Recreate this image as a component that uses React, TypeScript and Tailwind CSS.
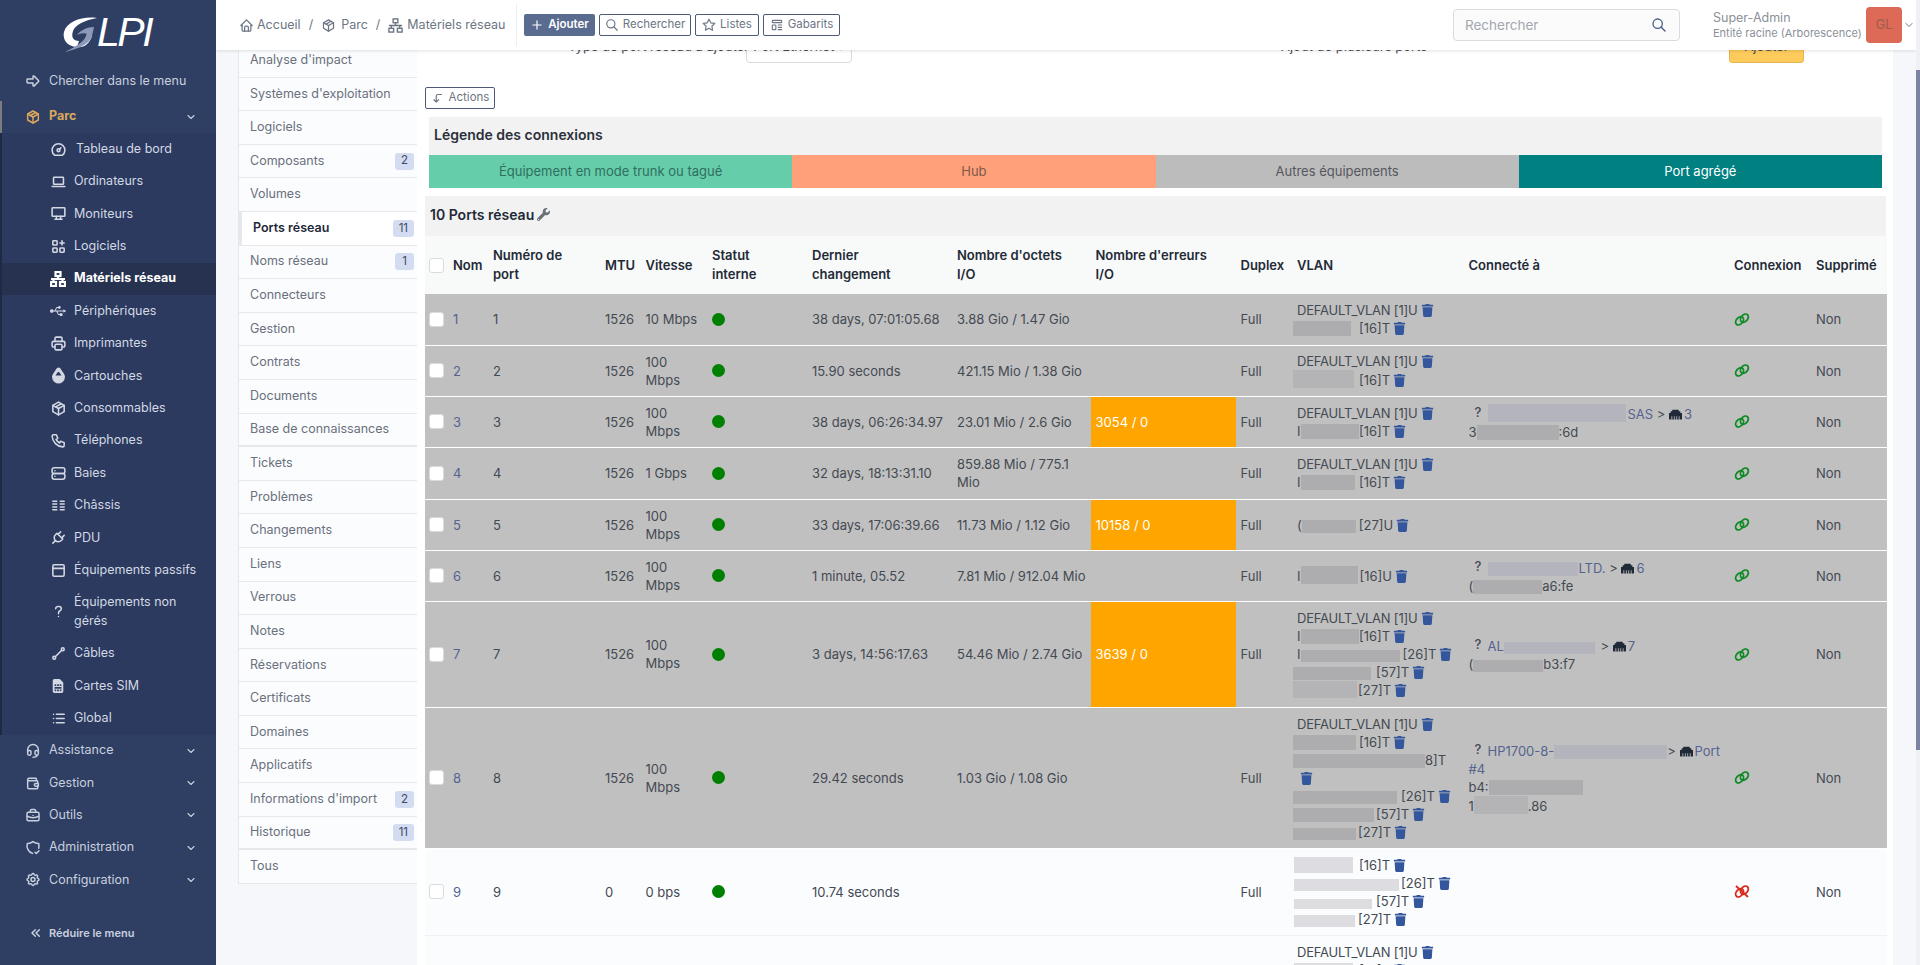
import type { ReactNode } from 'react'
import { FaEthernet, FaSimCard, FaTrash, FaUsb, FaWrench } from 'react-icons/fa'
import {
  TbApps,
  TbArrowBigRight,
  TbBriefcase,
  TbChevronDown,
  TbChevronsLeft,
  TbColumns,
  TbCornerLeftDown,
  TbDashboard,
  TbDeviceDesktop,
  TbDeviceLaptop,
  TbDropletHalf2Filled,
  TbHeadset,
  TbHome,
  TbLayoutNavbar,
  TbLine,
  TbList,
  TbPackage,
  TbPhone,
  TbPlug,
  TbPlus,
  TbPrinter,
  TbQuestionMark,
  TbSearch,
  TbServer,
  TbSettings,
  TbShieldCheck,
  TbStar,
  TbTemplate,
  TbWallet,
} from 'react-icons/tb'

// Three boxes wired together, the network equipment icon of the menu.
function NetIcon({ size }: { size: number }) {
  return (
    <svg viewBox="0 0 16 16" width={size} height={size} fill="none" stroke="currentColor" strokeWidth="1.5">
      <rect x="5.5" y="1" width="5" height="4" />
      <rect x="1" y="11" width="5" height="4" />
      <rect x="10" y="11" width="5" height="4" />
      <path d="M8 5v3M1 8h14M3.5 8v3M12.5 8v3" />
    </svg>
  )
}

function LinkIcon({ off }: { off?: boolean }) {
  return (
    <svg
      viewBox="0 0 16 13"
      width="16"
      height="13"
      fill="none"
      stroke="currentColor"
      strokeWidth="1.8"
      className={off ? 'text-[#d92b1c]' : 'text-[#0f8a25]'}
    >
      <ellipse cx="5.6" cy="7.8" rx="4.6" ry="3.3" transform="rotate(-48 5.6 7.8)" />
      <ellipse cx="10.4" cy="5.2" rx="4.6" ry="3.3" transform="rotate(-48 10.4 5.2)" />
      {off && <path d="M2 1l12 11" />}
    </svg>
  )
}

const subMenu = [
  { label: 'Tableau de bord', icon: <TbDashboard size={17} /> },
  { label: 'Ordinateurs', icon: <TbDeviceLaptop size={17} /> },
  { label: 'Moniteurs', icon: <TbDeviceDesktop size={17} /> },
  { label: 'Logiciels', icon: <TbApps size={17} /> },
  { label: 'Matériels réseau', icon: <NetIcon size={16} />, active: true },
  { label: 'Périphériques', icon: <FaUsb size={16} /> },
  { label: 'Imprimantes', icon: <TbPrinter size={17} /> },
  { label: 'Cartouches', icon: <TbDropletHalf2Filled size={17} /> },
  { label: 'Consommables', icon: <TbPackage size={17} /> },
  { label: 'Téléphones', icon: <TbPhone size={17} /> },
  { label: 'Baies', icon: <TbServer size={17} /> },
  { label: 'Châssis', icon: <TbColumns size={17} /> },
  { label: 'PDU', icon: <TbPlug size={17} /> },
  { label: 'Équipements passifs', icon: <TbLayoutNavbar size={17} /> },
  { label: 'Équipements non gérés', icon: <TbQuestionMark size={17} />, tall: true },
  { label: 'Câbles', icon: <TbLine size={17} /> },
  { label: 'Cartes SIM', icon: <FaSimCard size={14} /> },
  { label: 'Global', icon: <TbList size={17} /> },
]

const sections = [
  { label: 'Assistance', icon: <TbHeadset size={17} /> },
  { label: 'Gestion', icon: <TbWallet size={17} /> },
  { label: 'Outils', icon: <TbBriefcase size={17} /> },
  { label: 'Administration', icon: <TbShieldCheck size={17} /> },
  { label: 'Configuration', icon: <TbSettings size={17} /> },
]

const tabs: { label: string; badge?: string; active?: boolean; divider?: boolean }[] = [
  { label: "Analyse d'impact" },
  { label: "Systèmes d'exploitation" },
  { label: 'Logiciels' },
  { label: 'Composants', badge: '2' },
  { label: 'Volumes' },
  { label: 'Ports réseau', badge: '11', active: true },
  { label: 'Noms réseau', badge: '1' },
  { label: 'Connecteurs' },
  { label: 'Gestion' },
  { label: 'Contrats' },
  { label: 'Documents' },
  { label: 'Base de connaissances', divider: true },
  { label: 'Tickets' },
  { label: 'Problèmes' },
  { label: 'Changements' },
  { label: 'Liens' },
  { label: 'Verrous' },
  { label: 'Notes' },
  { label: 'Réservations' },
  { label: 'Certificats' },
  { label: 'Domaines' },
  { label: 'Applicatifs' },
  { label: "Informations d'import", badge: '2' },
  { label: 'Historique', badge: '11', divider: true },
  { label: 'Tous' },
]

const columns = [
  'w-[23.5px]',
  'w-[40px]',
  'w-[112px]',
  'w-[40.5px]',
  'w-[66.5px]',
  'w-[100px]',
  'w-[145px]',
  'w-[138.5px]',
  'w-[145px]',
  'w-[56.5px]',
  'w-[171.5px]',
  'w-[265.5px]',
  'w-[82px]',
  'w-[75px]',
]

const headings: ReactNode[] = [
  'Nom',
  <>
    Numéro de
    <br />
    port
  </>,
  'MTU',
  'Vitesse',
  <>
    Statut
    <br />
    interne
  </>,
  <>
    Dernier
    <br />
    changement
  </>,
  <>
    Nombre d'octets
    <br />
    I/O
  </>,
  <>
    Nombre d'erreurs
    <br />
    I/O
  </>,
  'Duplex',
  'VLAN',
  'Connecté à',
  'Connexion',
  'Supprimé',
]

// Masked values in the screenshot are grey blocks sitting inside the text line.
function Blur({ className, light }: { className: string; light?: boolean }) {
  return (
    <span
      className={`inline-block align-[-3px] ${className.includes('h-[') ? '' : 'h-[15px]'} ${
        light ? 'bg-[#dddde1]' : 'bg-[#adadb0]'
      } ${className}`}
    />
  )
}

function Trash() {
  return <FaTrash size={13} className="ml-[3px] inline-block align-[-2px] text-[#34569c]" />
}

function VlanLine({ children }: { children: ReactNode }) {
  return (
    <div className="whitespace-nowrap">
      {children}
      <Trash />
    </div>
  )
}

const defaultVlan = (
  <VlanLine>
    <span className="tracking-[-0.2px]">DEFAULT_VLAN [1]U</span>
  </VlanLine>
)

function A({ children }: { children: ReactNode }) {
  return <span className="text-[#55648f]">{children}</span>
}

function Unknown() {
  return <span className="inline-block w-[19px] text-center align-[2px] font-medium">?</span>
}

function Eth() {
  return <FaEthernet size={13} className="mr-[2px] inline-block align-[-2px] text-[#1f2937]" />
}

const rows: {
  n: string
  mtu: string
  speed: string
  changed: string
  octets: string
  errors?: string
  vlan: ReactNode
  link?: ReactNode
  height: string
  light?: boolean
  off?: boolean
}[] = [
  {
    n: '1',
    mtu: '1526',
    speed: '10 Mbps',
    changed: '38 days, 07:01:05.68',
    octets: '3.88 Gio / 1.47 Gio',
    height: 'h-[51px]',
    vlan: (
      <>
        {defaultVlan}
        <VlanLine>
          <Blur className="-ml-[4px] mr-[8px] w-[58px]" />
          [16]T
        </VlanLine>
      </>
    ),
  },
  {
    n: '2',
    mtu: '1526',
    speed: '100 Mbps',
    changed: '15.90 seconds',
    octets: '421.15 Mio / 1.38 Gio',
    height: 'h-[51px]',
    vlan: (
      <>
        {defaultVlan}
        <VlanLine>
          <Blur className="-ml-[4px] mr-[5px] h-[18px] w-[61px] bg-[#b4b4b6]" />
          [16]T
        </VlanLine>
      </>
    ),
  },
  {
    n: '3',
    mtu: '1526',
    speed: '100 Mbps',
    changed: '38 days, 06:26:34.97',
    octets: '23.01 Mio / 2.6 Gio',
    errors: '3054 / 0',
    height: 'h-[51px]',
    vlan: (
      <>
        {defaultVlan}
        <VlanLine>
          I<Blur className="w-[58.5px]" />
          [16]T
        </VlanLine>
      </>
    ),
    link: (
      <>
        <div className="whitespace-nowrap">
          <Unknown />
          <Blur className="mr-[2px] h-[18px] w-[138px] bg-[#b4b5bc]" />
          <A>SAS</A> &gt; <Eth />
          <A>3</A>
        </div>
        <div className="whitespace-nowrap">
          3<Blur className="w-[82px]" />
          :6d
        </div>
      </>
    ),
  },
  {
    n: '4',
    mtu: '1526',
    speed: '1 Gbps',
    changed: '32 days, 18:13:31.10',
    octets: '859.88 Mio / 775.1 Mio',
    height: 'h-[52px]',
    vlan: (
      <>
        {defaultVlan}
        <VlanLine>
          I<Blur className="mr-[4px] w-[54.5px]" />
          [16]T
        </VlanLine>
      </>
    ),
  },
  {
    n: '5',
    mtu: '1526',
    speed: '100 Mbps',
    changed: '33 days, 17:06:39.66',
    octets: '11.73 Mio / 1.12 Gio',
    errors: '10158 / 0',
    height: 'h-[51px]',
    vlan: (
      <VlanLine>
        (<Blur className="mr-[3px] h-[13px] w-[54px]" />
        [27]U
      </VlanLine>
    ),
  },
  {
    n: '6',
    mtu: '1526',
    speed: '100 Mbps',
    changed: '1 minute, 05.52',
    octets: '7.81 Mio / 912.04 Mio',
    height: 'h-[51px]',
    vlan: (
      <VlanLine>
        I<Blur className="mr-[2px] h-[18px] w-[57px]" />
        [16]U
      </VlanLine>
    ),
    link: (
      <>
        <div className="whitespace-nowrap">
          <Unknown />
          <Blur className="mr-[1px] h-[14px] w-[90px] bg-[#b4b5bc]" />
          <A>LTD.</A> &gt; <Eth />
          <A>6</A>
        </div>
        <div className="whitespace-nowrap">
          (<Blur className="h-[14px] w-[69px]" />
          a6:fe
        </div>
      </>
    ),
  },
  {
    n: '7',
    mtu: '1526',
    speed: '100 Mbps',
    changed: '3 days, 14:56:17.63',
    octets: '54.46 Mio / 2.74 Gio',
    errors: '3639 / 0',
    height: 'h-[106px]',
    vlan: (
      <>
        {defaultVlan}
        <VlanLine>
          I<Blur className="w-[58.5px]" />
          [16]T
        </VlanLine>
        <VlanLine>
          I<Blur className="mr-[3px] h-[12px] w-[99px]" />
          [26]T
        </VlanLine>
        <VlanLine>
          <Blur className="-ml-[4px] mr-[5px] h-[13px] w-[78px]" />
          [57]T
        </VlanLine>
        <VlanLine>
          <Blur className="-ml-[4px] mr-[1px] h-[17px] w-[64px] bg-[#b4b4b6]" />
          [27]T
        </VlanLine>
      </>
    ),
    link: (
      <>
        <div className="whitespace-nowrap">
          <Unknown />
          <A>AL</A>
          <Blur className="mr-[2px] h-[12px] w-[91px] bg-[#b4b5bc]" /> &gt; <Eth />
          <A>7</A>
        </div>
        <div className="whitespace-nowrap">
          (<Blur className="h-[12px] w-[70px]" />
          b3:f7
        </div>
      </>
    ),
  },
  {
    n: '8',
    mtu: '1526',
    speed: '100 Mbps',
    changed: '29.42 seconds',
    octets: '1.03 Gio / 1.08 Gio',
    height: 'h-[141px]',
    vlan: (
      <>
        {defaultVlan}
        <VlanLine>
          <Blur className="-ml-[4px] mr-[3px] w-[63px]" />
          [16]T
        </VlanLine>
        <div className="whitespace-nowrap">
          <Blur className="-ml-[4px] h-[14px] w-[132px]" />
          8]T
        </div>
        <div>
          <Trash />
        </div>
        <VlanLine>
          <Blur className="-ml-[4px] mr-[4px] h-[13px] w-[104px]" />
          [26]T
        </VlanLine>
        <VlanLine>
          <Blur className="-ml-[4px] mr-[2px] h-[14px] w-[81px]" />
          [57]T
        </VlanLine>
        <VlanLine>
          <Blur className="-ml-[4px] mr-[2px] h-[12px] w-[63px]" />
          [27]T
        </VlanLine>
      </>
    ),
    link: (
      <>
        <div className="whitespace-nowrap">
          <Unknown />
          <A>HP1700-8-</A>
          <Blur className="h-[14px] w-[113px] bg-[#b4b5bc]" />
          &gt; <Eth />
          <A>Port</A>
        </div>
        <div>
          <A>#4</A>
        </div>
        <div className="whitespace-nowrap">
          b4:
          <Blur className="w-[94px]" />
        </div>
        <div className="whitespace-nowrap">
          1<Blur className="h-[18px] w-[54px] bg-[#b4b4b6]" />
          .86
        </div>
      </>
    ),
  },
  {
    n: '9',
    mtu: '0',
    speed: '0 bps',
    changed: '10.74 seconds',
    octets: '',
    height: 'h-[87px]',
    light: true,
    off: true,
    vlan: (
      <>
        <VlanLine>
          <Blur light className="-ml-[3px] mr-[6px] h-[16px] w-[59px]" />
          [16]T
        </VlanLine>
        <VlanLine>
          <Blur light className="-ml-[3px] mr-[2px] h-[12px] w-[105px]" />
          [26]T
        </VlanLine>
        <VlanLine>
          <Blur light className="-ml-[3px] mr-[4px] h-[10px] w-[78px]" />
          [57]T
        </VlanLine>
        <VlanLine>
          <Blur light className="-ml-[3px] mr-[3px] h-[12px] w-[61px]" />
          [27]T
        </VlanLine>
      </>
    ),
  },
  {
    // Only the top of this row is on screen; its other cells sit below the fold.
    n: '',
    mtu: '',
    speed: '',
    changed: '',
    octets: '',
    height: 'h-[106px]',
    light: true,
    vlan: (
      <>
        {defaultVlan}
        <VlanLine>
          <Blur light className="-ml-[3px] mr-[6px] w-[59px]" />
          [16]T
        </VlanLine>
        <VlanLine>
          <Blur light className="-ml-[3px] mr-[2px] w-[105px]" />
          [26]T
        </VlanLine>
        <VlanLine>
          <Blur light className="-ml-[3px] mr-[4px] w-[78px]" />
          [57]T
        </VlanLine>
        <VlanLine>
          <Blur light className="-ml-[3px] mr-[3px] w-[61px]" />
          [27]T
        </VlanLine>
      </>
    ),
  },
]

function Checkbox() {
  return <span className="block h-[15px] w-[15px] rounded-[3px] border border-[#d8dbe0] bg-white" />
}

function Sidebar() {
  return (
    <aside className="flex h-full w-[216px] shrink-0 flex-col bg-[#2f3f64] text-[12.5px] text-[#d3d8e4] [&_svg]:stroke-[2.2]">
      <div className="flex h-[65px] items-start pl-[63px] pt-[17px] text-white">
        <svg viewBox="0 0 35 36" className="h-[36px] w-[35px]">
          <path d="M34 1C20-1 4 4 1 15c-2 9 5 15 13 15l2-6c-6 0-8-4-6-10 2-6 12-11 24-13z" fill="currentColor" />
          <path d="M14 30c6 1 12-2 15-11l-5-2c-2 7-5 10-8 12z" fill="currentColor" />
          <path d="M31 10c-9 0-15 5-17 8 4-2 8-2 10-1-2 7-10 12-22 18 12-3 24-7 27-16z" fill="#8d99b8" />
        </svg>
        <span className="-ml-[1px] font-['Liberation_Sans',sans-serif] text-[41px] leading-[31px] tracking-[-2.5px] italic">
          LPI
        </span>
      </div>
      <div className="flex h-[32.5px] items-center gap-[8px] pl-[25px] text-[#c9cfde]">
        <TbArrowBigRight size={16} />
        Chercher dans le menu
      </div>
      <div className="mt-[3px] flex h-[32.5px] items-center border-l-2 border-[#7b7b80] pl-[23px] font-bold text-[#dba75c]">
        <TbPackage size={16} className="mr-[8px]" />
        Parc
        <TbChevronDown size={12} className="ml-auto mr-[19px] text-[#c9cfde]" />
      </div>
      <ul className="border-l-2 border-[#1e2943] bg-[#2b3a5e]">
        {subMenu.map((item) => (
          <li
            key={item.label}
            className={`flex items-center gap-[7px] pl-[47px] ${item.tall ? 'h-[51px] pr-[10px]' : 'h-[32.4px]'} ${
              item.active ? 'bg-[#26324f] font-bold text-white' : ''
            }`}
          >
            <span className="flex w-[18px] shrink-0 justify-center">{item.icon}</span>
            <span className={item.label === 'Tableau de bord' ? 'ml-[2px]' : ''}>{item.label}</span>
          </li>
        ))}
      </ul>
      {sections.map((s) => (
        <div key={s.label} className="flex h-[32.3px] items-center pl-[25px] text-[#c9cfde]">
          <span className="mr-[8px] flex w-[16px] justify-center">{s.icon}</span>
          {s.label}
          <TbChevronDown size={12} className="ml-auto mr-[19px]" />
        </div>
      ))}
      <div className="mt-[29px] flex items-center gap-[5px] pl-[28px] text-[11px] font-semibold text-[#c9cfde]">
        <TbChevronsLeft size={16} />
        Réduire le menu
      </div>
    </aside>
  )
}

function HeaderButton({ icon, label, width }: { icon: ReactNode; label: string; width: string }) {
  return (
    <button
      className={`flex h-[22px] items-center justify-center gap-[4px] rounded-[2px] border border-[#4c5a78] text-[11.5px] text-[#6d7584] ${width}`}
    >
      {icon}
      {label}
    </button>
  )
}

function Header() {
  return (
    <header className="relative z-10 flex h-[50px] shrink-0 items-center bg-white pl-[23px] text-[12.5px] text-[#6d7584] shadow-[0_1px_3px_rgba(0,0,0,0.12)]">
      <div className="flex w-[277px] shrink-0 items-center whitespace-nowrap">
        <TbHome size={15} />
        <span className="ml-[3px]">Accueil</span>
        <span className="mx-[8px]">/</span>
        <TbPackage size={15} />
        <span className="ml-[5px]">Parc</span>
        <span className="mx-[8px]">/</span>
        <NetIcon size={15} />
        <span className="ml-[4px]">Matériels réseau</span>
      </div>
      <span className="h-[42px] w-px bg-[#eceef1]" />
      <div className="ml-[7px] flex gap-[4px]">
        <button className="flex h-[22px] w-[71px] items-center justify-center gap-[4px] rounded-[2px] bg-[#5a6b90] text-[11.5px] font-semibold text-white">
          <TbPlus size={14} />
          Ajouter
        </button>
        <HeaderButton icon={<TbSearch size={14} />} label="Rechercher" width="w-[92px]" />
        <HeaderButton icon={<TbStar size={14} />} label="Listes" width="w-[64px]" />
        <HeaderButton icon={<TbTemplate size={14} />} label="Gabarits" width="w-[77px]" />
      </div>
      <div className="ml-[613px] flex h-[32px] w-[227px] shrink-0 items-center justify-between rounded-[4px] border border-[#d8dbe0] bg-[#fbfbfc] pl-[11px] pr-[12px] text-[13.5px] text-[#a3a7ae]">
        Rechercher
        <TbSearch size={16} className="text-[#4c5f85]" />
      </div>
      <div className="ml-[33px] w-[153px] shrink-0 whitespace-nowrap text-[#8b9099]">
        <div className="text-[12.5px] leading-[17px]">Super-Admin</div>
        <div className="text-[11px] leading-[15px]">Entité racine (Arborescence)</div>
      </div>
      <div className="flex h-[36px] w-[36px] shrink-0 items-center justify-center rounded-[4px] bg-[#dd6a56] text-[13px] text-[#9c5d52]">
        GL
      </div>
      <TbChevronDown size={12} className="ml-[1px] shrink-0 text-[#6d7584]" />
    </header>
  )
}

function Tabs() {
  return (
    <nav className="-mt-[6px] w-[179px] shrink-0 self-start border-l border-[#e4e7ec] bg-[#fbfcfe] text-[12.5px] text-[#6a707c]">
      {tabs.map((t) => (
        <div
          key={t.label}
          className={`flex h-[33.6px] items-center justify-between border-b pr-[3px] ${
            t.divider ? 'border-b-2 border-[#e6e8ec]' : 'border-[#e6e8ec]'
          } ${t.active ? 'border-l-[3px] bg-white pl-[11px] font-semibold text-[#1f2937]' : 'pl-[11px]'}`}
        >
          {t.label}
          {t.badge && (
            <span className="flex h-[17px] min-w-[19px] items-center justify-center rounded-[3px] bg-[#d3dcf0] px-[6px] text-[11.5px] font-normal text-[#3d4a66]">
              {t.badge}
            </span>
          )}
        </div>
      ))}
    </nav>
  )
}

function Main() {
  return (
    <main className="w-[1476px] shrink-0 bg-white text-[13px] text-[#444a52]">
      <div className="-mt-[20px] flex h-[33px] items-center">
        <span className="ml-[151px] w-[172px] whitespace-nowrap">Type de port réseau à ajouter</span>
        <span className="ml-[6px] flex h-[33px] w-[106px] items-center justify-center rounded-[4px] border border-[#d8dbe0]">
          Port Ethernet ▾
        </span>
        <span className="ml-[429px] flex w-[159px] items-center gap-[4px] whitespace-nowrap">
          Ajout de plusieurs ports
          <span className="h-[6px] w-[7px] rounded-[1px] border border-[#9ca3af]" />
        </span>
        <span className="ml-[289px] flex h-[33px] w-[75px] items-center justify-center rounded-[3px] border border-[#e6b550] bg-[#fdcb5c]">
          Ajouter
        </span>
      </div>
      <button className="ml-[8px] mt-[24px] flex h-[22px] w-[70px] items-center justify-center gap-[4px] rounded-[2px] border border-[#4c5a78] text-[11.5px] text-[#6d7584]">
        <TbCornerLeftDown size={14} />
        Actions
      </button>
      <section className="ml-[12px] mt-[8px] w-[1453px]">
        <h3 className="flex h-[38px] items-center bg-[#f2f2f2] pb-[3px] pl-[5px] text-[14px] font-semibold text-[#2b303a]">
          Légende des connexions
        </h3>
        <div className="grid h-[33px] grid-cols-4 items-stretch text-center leading-[33px]">
          <div className="bg-[#66cdaa] text-[#2f6f60]">Équipement en mode trunk ou tagué</div>
          <div className="bg-[#ffa07a] text-[#7a5a4a]">Hub</div>
          <div className="bg-[#bcbcbc] text-[#55585e]">Autres équipements</div>
          <div className="bg-[#008080] text-white">Port agrégé</div>
        </div>
      </section>
      <div className="ml-[8px] mt-[8px] w-[1461px]">
        <div className="flex h-[40px] items-center gap-[3px] bg-[#f2f2f2] pb-[3px] pl-[5px] text-[14px] font-semibold text-[#1f2937]">
          10 Ports réseau
          <FaWrench size={13} className="text-[#6b6f76]" />
        </div>
        <table className="w-[1461px] table-fixed border-collapse">
          <colgroup>
            {columns.map((c, i) => (
              <col key={i} className={c} />
            ))}
          </colgroup>
          <thead>
            <tr className="h-[58px] bg-[#f8f9f9] text-left font-semibold leading-[19px] text-[#232a36]">
              <th className="pl-[4px]">
                <Checkbox />
              </th>
              {headings.map((h, i) => (
                <th key={i} className="px-[4.5px] font-semibold">
                  {h}
                </th>
              ))}
            </tr>
          </thead>
          <tbody className="leading-[18px]">
            {rows.map((r, i) => (
              <tr
                key={i}
                className={`${r.height} border-b ${
                  r.light ? 'border-[#eef0f3] bg-[#fbfcfe]' : 'border-white bg-[#c0c0c0]'
                }`}
              >
                <td className="pl-[4px]">
                  <Checkbox />
                </td>
                <td className="px-[4.5px] text-[#55648f]">{r.n}</td>
                <td className="px-[4.5px]">{r.n}</td>
                <td className="px-[4.5px]">{r.mtu}</td>
                <td className="px-[4.5px]">{r.speed}</td>
                <td className="px-[4.5px]">
                  <span className="block h-[13px] w-[13px] rounded-full bg-[#008000]" />
                </td>
                <td className="px-[4.5px]">{r.changed}</td>
                <td className="px-[4.5px]">{r.octets}</td>
                <td className={`px-[4.5px] ${r.errors ? 'bg-[#ffa500] text-white' : ''}`}>{r.errors}</td>
                <td className="px-[4.5px]">{r.n ? 'Full' : ''}</td>
                <td className="px-[4.5px]">{r.vlan}</td>
                <td className="px-[4.5px]">{r.link}</td>
                <td className="px-[4.5px]">
                  <LinkIcon off={r.off} />
                </td>
                <td className="px-[4.5px]">{r.n ? 'Non' : ''}</td>
              </tr>
            ))}
          </tbody>
        </table>
      </div>
    </main>
  )
}

export default function App() {
  return (
    <div className="flex h-[965px] w-[1920px] overflow-hidden bg-[#f5f7fb] font-['Inter',sans-serif]">
      <Sidebar />
      <div className="flex w-[1700px] shrink-0 flex-col overflow-hidden">
        <Header />
        <div className="flex min-h-0 flex-1 pl-[22px]">
          <Tabs />
          <Main />
        </div>
      </div>
      <div className="w-[4px] shrink-0 bg-[#eef0f6]">
        <div className="mt-[70px] h-[680px] w-[4px] bg-[#7b84a3]" />
      </div>
    </div>
  )
}
